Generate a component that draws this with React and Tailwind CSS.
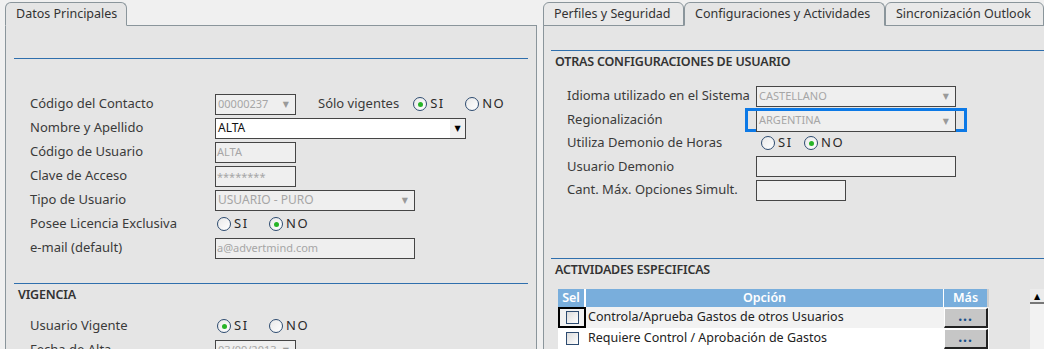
import React from 'react';

const font = { fontFamily: '"Noto Sans", "DejaVu Sans", sans-serif' };

function Radio({ checked, label, className = '' }) {
    return (
        <div className={`flex items-center gap-[3px] ${className}`}>
            <span className="w-[14px] h-[14px] rounded-full border border-[#2d4b70] bg-gradient-to-br from-[#e9e9e9] to-white flex items-center justify-center">
                {checked && <span className="w-[5px] h-[5px] rounded-full bg-[#27b427]" />}
            </span>
            <span className="text-[13px] text-[#2a2a2a] tracking-[1.5px]">{label}</span>
        </div>
    );
}

function RadioPair({ value, gap = 'w-[52px]' }) {
    return (
        <div className="flex items-center">
            <div className={gap}><Radio checked={value === 'SI'} label="SI" /></div>
            <Radio checked={value === 'NO'} label="NO" />
        </div>
    );
}

function Field({ value, w, h = 'h-[21px]', extra = '' }) {
    return (
        <div className={`${w} ${h} border border-[#454545] bg-[#efefef] flex items-center pl-[1px] text-[11px] text-[#a6a6a6] ${extra}`}>
            {value}
        </div>
    );
}

function Combo({ value, w, extra = '' }) {
    return (
        <div className={`${w} h-[21px] border border-[#454545] bg-[#efefef] flex items-center justify-between pl-[2px] pr-[6px] text-[11px] text-[#a6a6a6] ${extra}`}>
            <span>{value}</span>
            <span className="text-[8px] text-[#9a9a9a]">▼</span>
        </div>
    );
}

function Row({ label, children, labelW = 'w-[185px]', h = 'h-[24px]' }) {
    return (
        <div className={`flex items-center ${h}`}>
            <div className={`${labelW} shrink-0 text-[13px] text-[#3a3a3a] whitespace-nowrap`}>{label}</div>
            {children}
        </div>
    );
}

function Tab({ label, active, w }) {
    return (
        <div className={`${w} shrink-0 h-[24px] mt-[2px] rounded-t-[6px] border border-[#8a959b] ${active ? 'border-b-[#e5e5e5] bg-[#e5e5e5]' : 'bg-[#e9e9e9]'} flex items-center px-[10px] text-[12.5px] text-[#333] whitespace-nowrap relative z-10`}>
            {label}
        </div>
    );
}

function Heading({ children }) {
    return (
        <div className="pl-[4px] h-[22px] flex items-center text-[12.5px] font-semibold text-[#333] tracking-[-0.2px]">{children}</div>
    );
}

function MoreButton() {
    return (
        <div className="w-[44px] h-[20px] bg-[#c6c6c6] border-t border-l border-t-white border-l-white border-r-2 border-b-2 border-r-[#222] border-b-[#222] flex items-center justify-center">
            <span className="text-[14px] font-bold text-[#1b4f8a] leading-none -mt-[4px] tracking-[1px]">...</span>
        </div>
    );
}

function Check() {
    return <span className="w-[13px] h-[13px] border border-[#2d4b70] bg-gradient-to-br from-[#dcdcdc] to-white block" />;
}

export default function App() {
    return (
        <div style={font} className="w-[1044px] h-[349px] overflow-hidden bg-[#f0f0f0] flex">
            {/* left panel */}
            <div className="w-[537px] pl-[5px] shrink-0 flex flex-col">
                <div className="flex h-[26px] -mb-[1px]">
                    <Tab label="Datos Principales" active w="w-[122px]" />
                </div>
                <div className="flex-1 border border-[#8a959b] bg-[#e5e5e5] pl-[8px] pr-[8px]">
                    <div className="h-[32px]" />
                    <div className="border-t border-[#2f6fad]" />
                    <div className="pl-[16px] pt-[33px]">
                        <Row label="Código del Contacto">
                            <Combo value="00000237" w="w-[81px]" />
                            <span className="ml-[22px] text-[13px] text-[#3a3a3a]">Sólo vigentes</span>
                            <div className="ml-[14px]"><RadioPair value="SI" /></div>
                        </Row>
                        <Row label="Nombre y Apellido">
                            <div className="w-[251px] h-[21px] border border-[#454545] bg-white flex items-center justify-between pl-[2px] text-[12px] text-[#111]">
                                <span>ALTA</span>
                                <span className="w-[15px] h-full bg-[#f0f0f0] flex items-center justify-center text-[8px] text-black">▼</span>
                            </div>
                        </Row>
                        <Row label="Código de Usuario"><Field value="ALTA" w="w-[81px]" /></Row>
                        <Row label="Clave de Acceso"><Field value="********" w="w-[81px]" extra="text-[8px] items-start pt-[2px]" /></Row>
                        <Row label="Tipo de Usuario"><Combo value="USUARIO - PURO" w="w-[200px]" extra="text-[12px]" /></Row>
                        <Row label="Posee Licencia Exclusiva">
                            <div className="pl-[2px]"><RadioPair value="NO" /></div>
                        </Row>
                        <Row label="e-mail (default)"><Field value="a@advertmind.com" w="w-[200px]" /></Row>
                    </div>
                    <div className="h-[23px]" />
                    <div className="border-t border-[#2f6fad]" />
                    <Heading>VIGENCIA</Heading>
                    <div className="pl-[16px] pt-[8px]">
                        <Row label="Usuario Vigente">
                            <div className="pl-[2px]"><RadioPair value="SI" /></div>
                        </Row>
                        <Row label="Fecha de Alta">
                            <Combo value="03/09/2013" w="w-[81px]" />
                        </Row>
                    </div>
                </div>
            </div>

            {/* right panel */}
            <div className="flex-1 pl-[6px] flex flex-col min-w-0">
                <div className="flex h-[26px] -mb-[1px]">
                    <Tab label="Perfiles y Seguridad" w="w-[141px]" />
                    <Tab label="Configuraciones y Actividades" active w="w-[201px]" />
                    <Tab label="Sincronización Outlook" w="w-[159px]" />
                    <Tab label="" w="w-[20px]" />
                </div>
                <div className="flex-1 border-l border-t border-[#8a959b] bg-[#e5e5e5] pl-[7px]">
                    <div className="h-[24px]" />
                    <div className="border-t border-[#2f6fad]" />
                    <Heading>OTRAS CONFIGURACIONES DE USUARIO</Heading>
                    <div className="pl-[16px] pt-[11px]">
                        <Row label="Idioma utilizado en el Sistema" labelW="w-[189px]">
                            <Combo value="CASTELLANO" w="w-[200px]" />
                        </Row>
                        <Row label="Regionalización" labelW="w-[178px]" h="h-[23px]">
                            <div className="w-[222px] h-[24px] border-[3px] border-[#0c79e6] pl-[8px]">
                                <Combo value="ARGENTINA" w="w-[200px]" extra="h-[19px] border-t-0" />
                            </div>
                        </Row>
                        <Row label="Utiliza Demonio de Horas" labelW="w-[189px]">
                            <div className="pl-[5px]"><RadioPair value="NO" gap="w-[43px]" /></div>
                        </Row>
                        <Row label="Usuario Demonio" labelW="w-[189px]" h="h-[23px]">
                            <Field value="" w="w-[200px]" />
                        </Row>
                        <Row label="Cant. Máx. Opciones Simult." labelW="w-[189px]">
                            <Field value="" w="w-[90px]" />
                        </Row>
                    </div>
                    <div className="h-[56px]" />
                    <div className="border-t border-[#2f6fad]" />
                    <Heading>ACTIVIDADES ESPECIFICAS</Heading>
                    <div className="flex pt-[8px]">
                        <div className="ml-[7px] w-[432px]">
                            <div className="flex h-[18px] bg-[#79aedc] text-[12.5px] font-semibold text-white">
                                <div className="w-[28px] flex items-center justify-center border-r-2 border-white">Sel</div>
                                <div className="flex-1 flex items-center justify-center border-r border-white">Opción</div>
                                <div className="w-[45px] flex items-center justify-center border-r-2 border-[#cfcfcf]">Más</div>
                            </div>
                            <div className="flex h-[21px] bg-[#f2f2f2] text-[12.5px] text-[#222]">
                                <div className="w-[28px] border-2 border-black flex items-center justify-center"><Check /></div>
                                <div className="flex-1 flex items-center pl-[2px]">Controla/Aprueba Gastos de otros Usuarios</div>
                                <div className="w-[45px] flex items-end"><MoreButton /></div>
                            </div>
                            <div className="flex h-[21px] bg-white text-[12.5px] text-[#222]">
                                <div className="w-[28px] flex items-center justify-center"><Check /></div>
                                <div className="flex-1 flex items-center pl-[2px]">Requiere Control / Aprobación de Gastos</div>
                                <div className="w-[45px] flex items-end"><MoreButton /></div>
                            </div>
                        </div>
                        <div className="ml-[41px] w-[14px] bg-[#f2f2f2]">
                            <div className="h-[15px] bg-[#ececec] border-b-2 border-[#777] flex items-center justify-center text-[8px] text-black">▲</div>
                        </div>
                    </div>
                </div>
            </div>
        </div>
    );
}
